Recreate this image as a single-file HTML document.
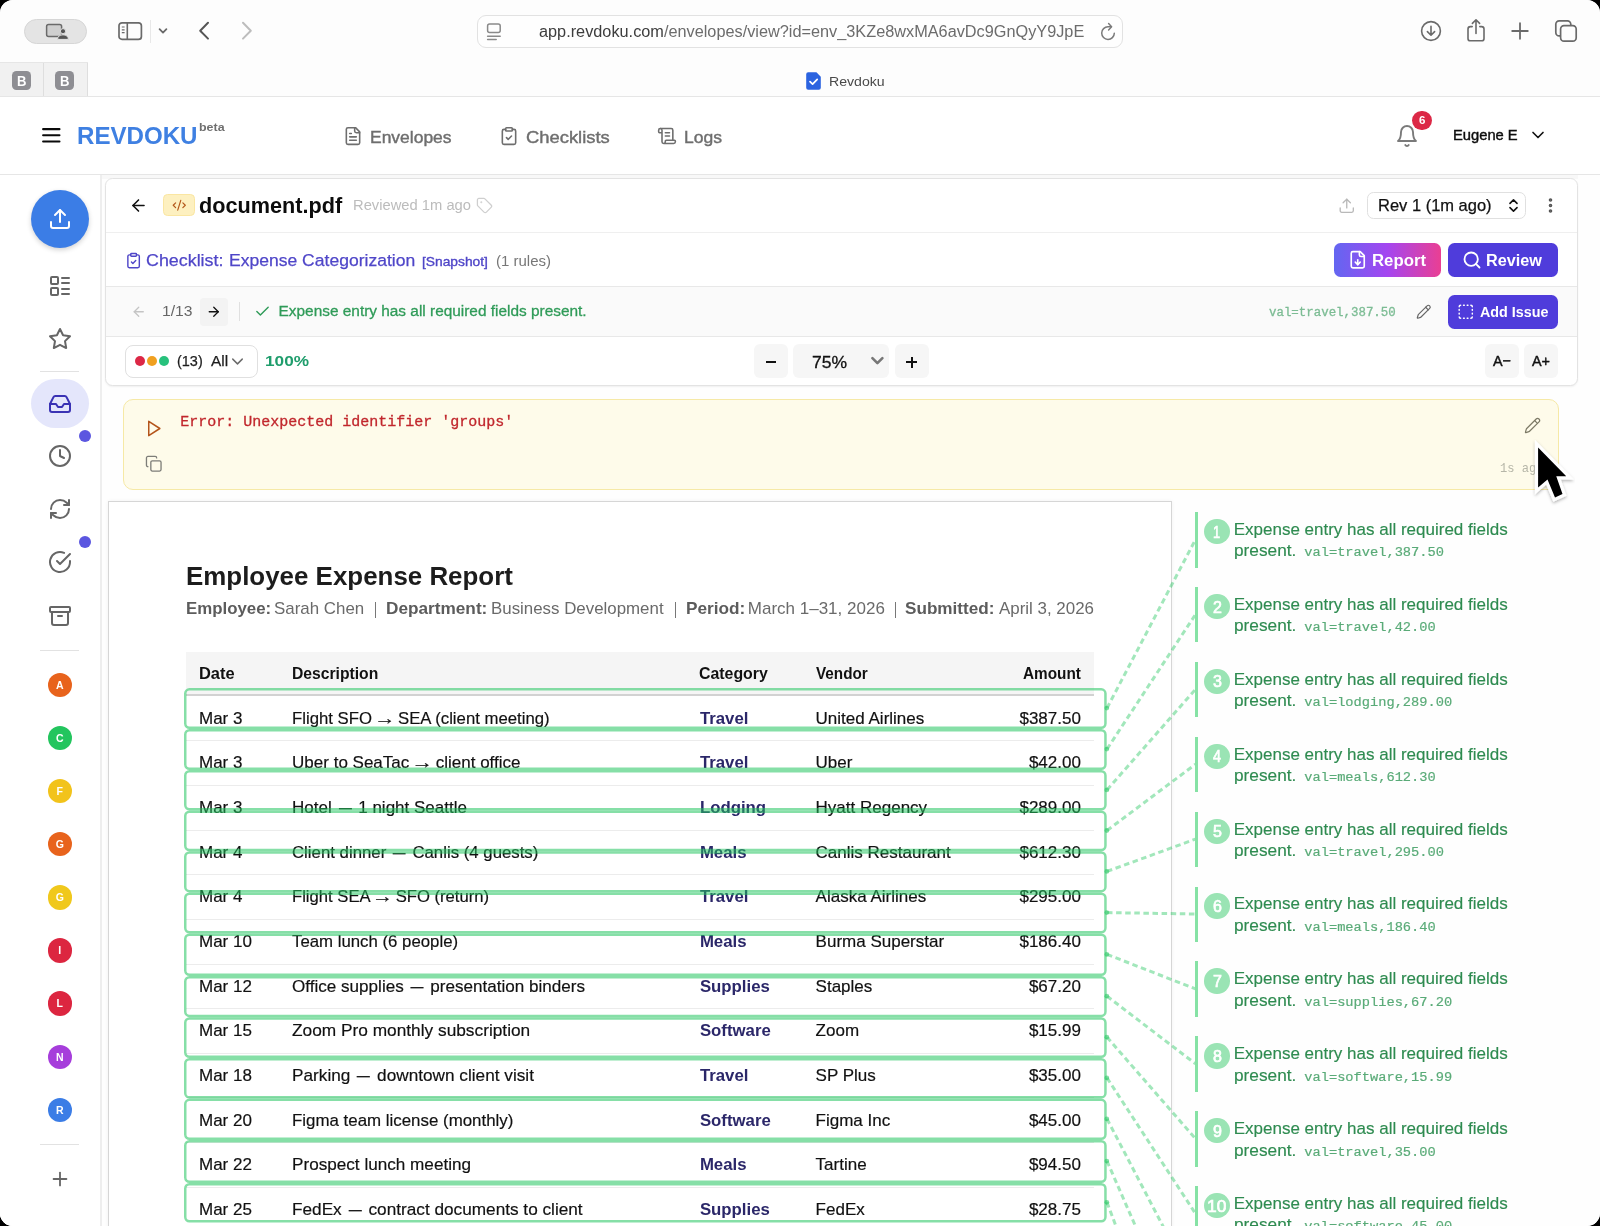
<!DOCTYPE html>
<html lang="en"><head><meta charset="utf-8"><title>Revdoku</title><style>
html,body{margin:0;padding:0}
body{width:1600px;height:1226px;overflow:hidden;background:#000;position:relative;font-family:"Liberation Sans",sans-serif}
#w{position:absolute;left:0;top:0;width:1600px;height:1226px;border-radius:13px;overflow:hidden;background:#fff;will-change:transform}
.a{position:absolute;box-sizing:border-box}
.t{white-space:pre;transform-origin:0 0}
.ar{display:inline-block;width:1em;text-align:center;transform:scaleX(1.28)}
.em{display:inline-block;transform:scaleX(.76)}
.i{fill:none;stroke:currentColor;stroke-linecap:round;stroke-linejoin:round}
</style></head>
<body><div id="w">
<div class="a" style="left:0px;top:0px;width:1600px;height:97px;background:#fdfdfd;"></div>
<div class="a" style="left:0px;top:63px;width:87px;height:33px;background:#f1f1f1;"></div>
<div class="a" style="left:43px;top:63px;width:1px;height:33px;background:#dedede;"></div>
<div class="a" style="left:86.5px;top:63px;width:1px;height:33px;background:#dedede;"></div>
<div class="a" style="left:0px;top:62px;width:88px;height:1px;background:#e6e6e6;"></div>
<div class="a" style="left:0px;top:96px;width:1600px;height:2px;background:#e6e6e6;"></div>
<div class="a" style="left:12px;top:71px;width:19px;height:19px;background:#8e8e93;border-radius:4.5px;"></div>
<div class="a t" style="left:16.67px;top:74px;color:#fff;font:700 14px/14px 'Liberation Sans',sans-serif;transform:scaleX(0.9333);">B</div>
<div class="a" style="left:55px;top:71px;width:19px;height:19px;background:#8e8e93;border-radius:4.5px;"></div>
<div class="a t" style="left:59.67px;top:74px;color:#fff;font:700 14px/14px 'Liberation Sans',sans-serif;transform:scaleX(0.9333);">B</div>
<div class="a" style="left:24px;top:19px;width:63px;height:24.5px;background:#e4e4e4;border-radius:12.5px;border:1px solid #d6d6d6;"></div>
<svg class="a" style="left:45px;top:23px;" width="24" height="17" viewBox="0 0 24 17"><rect x="1.6" y="1.6" width="15" height="12" rx="2" fill="#cfcfcf" stroke="#6a6a6a" stroke-width="1.5"/><circle cx="18" cy="8.2" r="2.6" fill="#555" stroke="#e4e4e4" stroke-width="1"/><path d="M12.6 16.4c0-3.2 2.4-4.6 5.4-4.6s5.4 1.4 5.4 4.6z" fill="#555" stroke="#e4e4e4" stroke-width="1"/></svg>
<svg class="a" style="left:117px;top:21px;" width="26" height="20" viewBox="0 0 26 20"><rect x="2" y="1.8" width="22.4" height="16.6" rx="3" fill="none" stroke="#6a6a6a" stroke-width="1.7"/><path d="M10.3 2v16.4" stroke="#6a6a6a" stroke-width="1.6"/><path d="M4.8 6h2.8M4.8 8.8h2.8M4.8 11.6h2.8" stroke="#6a6a6a" stroke-width="1.2"/></svg>
<div class="a" style="left:150px;top:20px;width:1px;height:23px;background:#e8e8e8;"></div>
<svg class="a" style="left:157px;top:26px;" width="12" height="10" viewBox="0 0 12 10"><path d="M2.6 3.2 6 6.6l3.4-3.4" fill="none" stroke="#6a6a6a" stroke-width="1.8" stroke-linecap="round" stroke-linejoin="round"/></svg>
<svg class="a" style="left:196px;top:20px;" width="16" height="22" viewBox="0 0 16 22"><path d="M12 2.8 4.2 10.7 12 18.6" fill="none" stroke="#565656" stroke-width="2" stroke-linecap="round" stroke-linejoin="round"/></svg>
<svg class="a" style="left:239px;top:20px;" width="16" height="22" viewBox="0 0 16 22"><path d="M4 2.8l7.8 7.9L4 18.6" fill="none" stroke="#bdbdbd" stroke-width="2" stroke-linecap="round" stroke-linejoin="round"/></svg>
<div class="a" style="left:477px;top:15px;width:646px;height:32.5px;background:#fefefe;border-radius:9px;border:1px solid #e2e2e2;"></div>
<svg class="a" style="left:485px;top:21px;" width="18" height="21" viewBox="0 0 18 21"><rect x="2.6" y="3" width="12.6" height="8.6" rx="2" fill="none" stroke="#8a8a8a" stroke-width="1.5"/><path d="M2.6 15.2h12.6M2.6 18.6h8.6" stroke="#8a8a8a" stroke-width="1.5" stroke-linecap="round"/></svg>
<div class="a t" style="left:538.96px;top:24px;color:#6c6c6c;font:400 15.6px/15.6px 'Liberation Sans',sans-serif;transform:scaleX(1.0441);"><span style="color:#3d3d3d">app.revdoku.com</span>/envelopes/view?id=env_3KZe8wxMA6avDc9GnQyY9JpE</div>
<svg class="a" style="left:1099px;top:21px;" width="18" height="21" viewBox="0 0 18 21"><path d="M15.3 12.2a6.3 6.3 0 1 1-6.3-6.4h3" fill="none" stroke="#7a7a7a" stroke-width="1.5" stroke-linecap="round"/><path d="M9.6 2.6l3 3.2-3 3.1" fill="none" stroke="#7a7a7a" stroke-width="1.5" stroke-linecap="round" stroke-linejoin="round"/></svg>
<svg class="a" style="left:805px;top:71px;" width="17" height="20" viewBox="0 0 17 20"><path d="M1.2 3.2a2 2 0 0 1 2-2h8.2l4.4 4.6v11a2 2 0 0 1-2 2H3.2a2 2 0 0 1-2-2z" fill="#2b63e0"/><path d="M5 10.6l2.6 2.6 4.6-4.8" fill="none" stroke="#fff" stroke-width="1.7" stroke-linecap="round" stroke-linejoin="round"/></svg>
<div class="a t" style="left:828.96px;top:75px;color:#4a4a4a;font:400 13.6px/13.6px 'Liberation Sans',sans-serif;transform:scaleX(1.0385);">Revdoku</div>
<svg class="a" style="left:1419px;top:19px;" width="24" height="24" viewBox="0 0 24 24"><circle cx="12" cy="12" r="9.4" fill="none" stroke="#6a6a6a" stroke-width="1.6"/><path d="M12 7.4v8.6M8.4 12.6l3.6 3.6 3.6-3.6" fill="none" stroke="#6a6a6a" stroke-width="1.6" stroke-linecap="round" stroke-linejoin="round"/></svg>
<svg class="a" style="left:1464px;top:17px;" width="24" height="27" viewBox="0 0 24 27"><path d="M8.2 9.6H6.4a2.4 2.4 0 0 0-2.4 2.4v9.4a2.4 2.4 0 0 0 2.4 2.4h11.2a2.4 2.4 0 0 0 2.4-2.4V12a2.4 2.4 0 0 0-2.4-2.4h-1.8" fill="none" stroke="#6a6a6a" stroke-width="1.6" stroke-linecap="round"/><path d="M12 16.4V3.2M8.4 6.4 12 2.8l3.6 3.6" fill="none" stroke="#6a6a6a" stroke-width="1.6" stroke-linecap="round" stroke-linejoin="round"/></svg>
<svg class="a" style="left:1510px;top:21px;" width="20" height="20" viewBox="0 0 20 20"><path d="M10 2.2v15.6M2.2 10h15.6" fill="none" stroke="#6a6a6a" stroke-width="1.8" stroke-linecap="round"/></svg>
<svg class="a" style="left:1553px;top:18px;" width="26" height="26" viewBox="0 0 26 26"><rect x="2.8" y="2.8" width="15" height="15" rx="3.4" fill="none" stroke="#6a6a6a" stroke-width="1.7"/><rect x="7.6" y="7.6" width="15.6" height="15.6" rx="3.4" fill="#fdfdfd" stroke="#6a6a6a" stroke-width="1.7"/></svg>
<div class="a" style="left:0px;top:97px;width:1600px;height:77.5px;background:#fff;"></div>
<div class="a" style="left:0px;top:174px;width:1600px;height:1px;background:#e6e6e6;"></div>
<svg class="a i" style="left:38.70px;top:123.00px;color:#0a0a0a;" width="24.6" height="24.6" viewBox="0 0 24 24" stroke-width="2"><path d="M4 12h16M4 6h16M4 18h16"/></svg>
<div class="a t" style="left:76.84px;top:124px;color:#3f80e2;font:700 24.6px/24.6px 'Liberation Sans',sans-serif;transform:scaleX(0.9800);">REVDOKU</div>
<div class="a t" style="left:199.27px;top:122px;color:#6f6f6f;font:700 11px/11px 'Liberation Sans',sans-serif;transform:scaleX(1.1318);">beta</div>
<svg class="a i" style="left:342.60px;top:126.20px;color:#6e6e6e;" width="20" height="20" viewBox="0 0 24 24" stroke-width="1.9"><path d="M15 2H6a2 2 0 0 0-2 2v16a2 2 0 0 0 2 2h12a2 2 0 0 0 2-2V7Z"/><path d="M14 2v4a2 2 0 0 0 2 2h4"/><path d="M10 9H8"/><path d="M16 13H8"/><path d="M16 17H8"/></svg>
<div class="a t" style="left:369.75px;top:130px;color:#6e6e6e;font:400 16.6px/16.6px 'Liberation Sans',sans-serif;transform:scaleX(1.0526);-webkit-text-stroke:0.4px #6e6e6e;">Envelopes</div>
<svg class="a i" style="left:498.70px;top:126.20px;color:#6e6e6e;" width="20" height="20" viewBox="0 0 24 24" stroke-width="1.9"><rect width="8" height="4" x="8" y="2" rx="1" ry="1"/><path d="M16 4h2a2 2 0 0 1 2 2v14a2 2 0 0 1-2 2H6a2 2 0 0 1-2-2V6a2 2 0 0 1 2-2h2"/><path d="m9 14 2 2 4-4"/></svg>
<div class="a t" style="left:525.69px;top:130px;color:#6e6e6e;font:400 16.6px/16.6px 'Liberation Sans',sans-serif;transform:scaleX(1.1081);-webkit-text-stroke:0.4px #6e6e6e;">Checklists</div>
<svg class="a i" style="left:657.00px;top:126.20px;color:#6e6e6e;" width="20" height="20" viewBox="0 0 24 24" stroke-width="1.9"><path d="M15 12h-5"/><path d="M15 8h-5"/><path d="M19 17V5a2 2 0 0 0-2-2H4"/><path d="M8 21h12a2 2 0 0 0 2-2v-1a1 1 0 0 0-1-1H11a1 1 0 0 0-1 1v1a2 2 0 1 1-4 0V5a2 2 0 1 0-4 0v2a1 1 0 0 0 1 1h3"/></svg>
<div class="a t" style="left:683.94px;top:130px;color:#6e6e6e;font:400 16.6px/16.6px 'Liberation Sans',sans-serif;transform:scaleX(1.0571);-webkit-text-stroke:0.4px #6e6e6e;">Logs</div>
<svg class="a i" style="left:1394.60px;top:123.60px;color:#7a7a7a;" width="24" height="24" viewBox="0 0 24 24" stroke-width="1.9"><path d="M6 8a6 6 0 0 1 12 0c0 7 3 9 3 9H3s3-2 3-9"/><path d="M10.3 21a1.94 1.94 0 0 0 3.4 0"/></svg>
<div class="a" style="left:1412px;top:110.8px;width:19.6px;height:19.6px;background:#dc2846;border-radius:10px;"></div>
<div class="a t" style="left:1418.70px;top:115px;color:#fff;font:700 11.2px/11.2px 'Liberation Sans',sans-serif;transform:scaleX(1.0333);">6</div>
<div class="a t" style="left:1452.66px;top:128px;color:#0d0d0d;font:400 14.2px/14.2px 'Liberation Sans',sans-serif;transform:scaleX(1.0377);-webkit-text-stroke:0.4px #0d0d0d;">Eugene E</div>
<svg class="a i" style="left:1527.50px;top:125.40px;color:#111;" width="20" height="20" viewBox="0 0 24 24" stroke-width="2"><path d="m6 9 6 6 6-6"/></svg>
<div class="a" style="left:0px;top:175px;width:1600px;height:1051px;background:#fefefe;"></div>
<div class="a" style="left:102px;top:175px;width:1476px;height:4px;background:#f8f8f8;"></div>
<div class="a" style="left:0px;top:175px;width:101px;height:1051px;background:#fff;"></div>
<div class="a" style="left:100px;top:175px;width:2px;height:1051px;background:#eeeeee;"></div>
<div class="a" style="left:31px;top:189.5px;width:58px;height:58px;background:#3b7de6;border-radius:29px;box-shadow:0 2px 5px rgba(0,0,0,.18);"></div>
<svg class="a i" style="left:48.30px;top:206.80px;color:#fff;" width="24" height="24" viewBox="0 0 24 24" stroke-width="2"><path d="M21 15v4a2 2 0 0 1-2 2H5a2 2 0 0 1-2-2v-4"/><path d="m17 8-5-5-5 5"/><path d="M12 3v12"/></svg>
<svg class="a i" style="left:48.30px;top:274.00px;color:#666;" width="24" height="24" viewBox="0 0 24 24" stroke-width="2"><rect width="7" height="7" x="3" y="3" rx="1"/><rect width="7" height="7" x="3" y="14" rx="1"/><path d="M14 4h7"/><path d="M14 9h7"/><path d="M14 15h7"/><path d="M14 20h7"/></svg>
<svg class="a i" style="left:48.30px;top:327.00px;color:#666;" width="24" height="24" viewBox="0 0 24 24" stroke-width="2"><path d="M12 2l3.09 6.26L22 9.27l-5 4.87 1.18 6.88L12 17.77l-6.18 3.25L7 14.14 2 9.27l6.91-1.01z"/></svg>
<div class="a" style="left:40px;top:371px;width:39px;height:1px;background:#e2e2e2;"></div>
<div class="a" style="left:31px;top:379px;width:58px;height:49px;background:#e4e6fb;border-radius:24.5px;"></div>
<svg class="a i" style="left:48.00px;top:391.50px;color:#3a32b4;" width="24" height="24" viewBox="0 0 24 24" stroke-width="2"><path d="M22 12h-6l-2 3h-4l-2-3H2"/><path d="M5.45 5.11 2 12v6a2 2 0 0 0 2 2h16a2 2 0 0 0 2-2v-6l-3.45-6.89A2 2 0 0 0 16.76 4H7.24a2 2 0 0 0-1.79 1.11z"/></svg>
<div class="a" style="left:79px;top:430px;width:12px;height:12px;background:#5b56e0;border-radius:6px;"></div>
<svg class="a i" style="left:48.30px;top:444.30px;color:#666;" width="24" height="24" viewBox="0 0 24 24" stroke-width="2"><circle cx="12" cy="12" r="10"/><path d="M12 6v6l4 2"/></svg>
<svg class="a i" style="left:48.30px;top:497.30px;color:#666;" width="24" height="24" viewBox="0 0 24 24" stroke-width="2"><path d="M3 12a9 9 0 0 1 9-9 9.75 9.75 0 0 1 6.74 2.74L21 8"/><path d="M21 3v5h-5"/><path d="M21 12a9 9 0 0 1-9 9 9.75 9.75 0 0 1-6.74-2.74L3 16"/><path d="M8 16H3v5"/></svg>
<div class="a" style="left:79px;top:536px;width:12px;height:12px;background:#5b56e0;border-radius:6px;"></div>
<svg class="a i" style="left:48.30px;top:550.30px;color:#666;" width="24" height="24" viewBox="0 0 24 24" stroke-width="2"><path d="M22 11.08V12a10 10 0 1 1-5.93-9.14"/><path d="m9 11 3 3L22 4"/></svg>
<svg class="a i" style="left:48.30px;top:603.70px;color:#666;" width="24" height="24" viewBox="0 0 24 24" stroke-width="2"><rect width="20" height="5" x="2" y="3" rx="1"/><path d="M4 8v11a2 2 0 0 0 2 2h12a2 2 0 0 0 2-2V8"/><path d="M10 12h4"/></svg>
<div class="a" style="left:40px;top:650px;width:39px;height:1px;background:#e2e2e2;"></div>
<div class="a" style="left:47.6px;top:672.6999999999999px;width:24.4px;height:24.4px;background:#e8631c;border-radius:12.2px;"></div>
<div class="a t" style="left:47.6px;top:672.7px;width:24.4px;height:24.4px;line-height:24.6px;text-align:center;color:#fff;font-weight:700;font-size:10.5px">A</div>
<div class="a" style="left:47.6px;top:725.8px;width:24.4px;height:24.4px;background:#23c55e;border-radius:12.2px;"></div>
<div class="a t" style="left:47.6px;top:725.8px;width:24.4px;height:24.4px;line-height:24.6px;text-align:center;color:#fff;font-weight:700;font-size:10.5px">C</div>
<div class="a" style="left:47.6px;top:779.0px;width:24.4px;height:24.4px;background:#f2c31b;border-radius:12.2px;"></div>
<div class="a t" style="left:47.6px;top:779.0px;width:24.4px;height:24.4px;line-height:24.6px;text-align:center;color:#fff;font-weight:700;font-size:10.5px">F</div>
<div class="a" style="left:47.6px;top:832.0999999999999px;width:24.4px;height:24.4px;background:#e8631c;border-radius:12.2px;"></div>
<div class="a t" style="left:47.6px;top:832.1px;width:24.4px;height:24.4px;line-height:24.6px;text-align:center;color:#fff;font-weight:700;font-size:10.5px">G</div>
<div class="a" style="left:47.6px;top:885.1999999999999px;width:24.4px;height:24.4px;background:#f0c81c;border-radius:12.2px;"></div>
<div class="a t" style="left:47.6px;top:885.2px;width:24.4px;height:24.4px;line-height:24.6px;text-align:center;color:#fff;font-weight:700;font-size:10.5px">G</div>
<div class="a" style="left:47.6px;top:938.3px;width:24.4px;height:24.4px;background:#dc2640;border-radius:12.2px;"></div>
<div class="a t" style="left:47.6px;top:938.3px;width:24.4px;height:24.4px;line-height:24.6px;text-align:center;color:#fff;font-weight:700;font-size:10.5px">I</div>
<div class="a" style="left:47.6px;top:991.4px;width:24.4px;height:24.4px;background:#dc2640;border-radius:12.2px;"></div>
<div class="a t" style="left:47.6px;top:991.4px;width:24.4px;height:24.4px;line-height:24.6px;text-align:center;color:#fff;font-weight:700;font-size:10.5px">L</div>
<div class="a" style="left:47.6px;top:1044.8px;width:24.4px;height:24.4px;background:#a63ddb;border-radius:12.2px;"></div>
<div class="a t" style="left:47.6px;top:1044.8px;width:24.4px;height:24.4px;line-height:24.6px;text-align:center;color:#fff;font-weight:700;font-size:10.5px">N</div>
<div class="a" style="left:47.6px;top:1098.0px;width:24.4px;height:24.4px;background:#3b7de6;border-radius:12.2px;"></div>
<div class="a t" style="left:47.6px;top:1098.0px;width:24.4px;height:24.4px;line-height:24.6px;text-align:center;color:#fff;font-weight:700;font-size:10.5px">R</div>
<div class="a" style="left:40px;top:1144px;width:39px;height:1px;background:#e2e2e2;"></div>
<svg class="a i" style="left:49.00px;top:1168.00px;color:#666;" width="22" height="22" viewBox="0 0 24 24" stroke-width="2"><path d="M5 12h14"/><path d="M12 5v14"/></svg>
<div class="a" style="left:104.5px;top:178px;width:1473px;height:207.5px;background:#fff;border-radius:7.5px;border:1px solid #e3e3e3;box-shadow:0 1px 2px rgba(0,0,0,.06);"></div>
<div class="a" style="left:105.5px;top:232px;width:1471px;height:1px;background:#efefef;"></div>
<div class="a" style="left:105.5px;top:286.5px;width:1471px;height:50px;background:#fafafa;"></div>
<div class="a" style="left:105.5px;top:286px;width:1471px;height:1px;background:#e8e8e8;"></div>
<div class="a" style="left:105.5px;top:336px;width:1471px;height:1px;background:#e8e8e8;"></div>
<svg class="a i" style="left:129.10px;top:195.50px;color:#111;" width="19" height="19" viewBox="0 0 24 24" stroke-width="2"><path d="m12 19-7-7 7-7"/><path d="M19 12H5"/></svg>
<div class="a" style="left:163px;top:194px;width:31.5px;height:22px;background:#fdf0c0;border-radius:4.5px;border:1px solid #fae6a2;"></div>
<svg class="a i" style="left:171.65px;top:198.05px;color:#b4591c;" width="14.5" height="14.5" viewBox="0 0 24 24" stroke-width="2"><path d="m18 16 4-4-4-4"/><path d="m6 8-4 4 4 4"/><path d="m14.5 4-5 16"/></svg>
<div class="a t" style="left:199.22px;top:195px;color:#0c0c0c;font:700 22px/22px 'Liberation Sans',sans-serif;transform:scaleX(0.9848);">document.pdf</div>
<div class="a t" style="left:352.53px;top:197px;color:#bcbcbc;font:400 15.2px/15.2px 'Liberation Sans',sans-serif;transform:scaleX(0.9708);">Reviewed 1m ago</div>
<svg class="a i" style="left:476.00px;top:197.00px;color:#cfcfcf;" width="17" height="17" viewBox="0 0 24 24" stroke-width="1.8"><path d="M12.586 2.586A2 2 0 0 0 11.172 2H4a2 2 0 0 0-2 2v7.172a2 2 0 0 0 .586 1.414l8.704 8.704a2.426 2.426 0 0 0 3.42 0l6.58-6.58a2.426 2.426 0 0 0 0-3.42z"/><circle cx="7.5" cy="7.5" r=".5" fill="currentColor"/></svg>
<svg class="a i" style="left:1337.75px;top:196.75px;color:#b9b9b9;" width="17.5" height="17.5" viewBox="0 0 24 24" stroke-width="1.8"><path d="M21 15v4a2 2 0 0 1-2 2H5a2 2 0 0 1-2-2v-4"/><path d="m17 8-5-5-5 5"/><path d="M12 3v12"/></svg>
<div class="a" style="left:1367px;top:192px;width:158.5px;height:26.5px;background:#fff;border-radius:6.5px;border:1px solid #e0e0e0;"></div>
<div class="a t" style="left:1377.53px;top:197px;color:#111;font:400 17px/17px 'Liberation Sans',sans-serif;transform:scaleX(0.9696);-webkit-text-stroke:0.25px #111;">Rev 1 (1m ago)</div>
<svg class="a i" style="left:1504.50px;top:196.70px;color:#111;" width="17" height="17" viewBox="0 0 24 24" stroke-width="2.2"><path d="m7 15 5 5 5-5"/><path d="m7 9 5-5 5 5"/></svg>
<svg class="a i" style="left:1540.90px;top:196.10px;color:#555;" width="19" height="19" viewBox="0 0 24 24" stroke-width="2.6"><circle cx="12" cy="12" r="1"/><circle cx="12" cy="5" r="1"/><circle cx="12" cy="19" r="1"/></svg>
<svg class="a i" style="left:124.50px;top:251.60px;color:#4f46c8;" width="17.2" height="17.2" viewBox="0 0 24 24" stroke-width="2"><rect width="8" height="4" x="8" y="2" rx="1" ry="1"/><path d="M16 4h2a2 2 0 0 1 2 2v14a2 2 0 0 1-2 2H6a2 2 0 0 1-2-2V6a2 2 0 0 1 2-2h2"/><path d="m9 14 2 2 4-4"/></svg>
<div class="a t" style="left:145.97px;top:252px;color:#4f46c8;font:400 17.4px/17.4px 'Liberation Sans',sans-serif;transform:scaleX(1.0274);-webkit-text-stroke:0.25px #4f46c8;">Checklist:</div>
<div class="a t" style="left:229.49px;top:252px;color:#4f46c8;font:400 17.4px/17.4px 'Liberation Sans',sans-serif;transform:scaleX(1.0082);-webkit-text-stroke:0.25px #4f46c8;">Expense Categorization</div>
<div class="a t" style="left:422.39px;top:256px;color:#4f46c8;font:400 12.4px/12.4px 'Liberation Sans',sans-serif;transform:scaleX(1.1121);-webkit-text-stroke:0.35px #4f46c8;">[Snapshot]</div>
<div class="a t" style="left:496.00px;top:253px;color:#777;font:400 15px/15px 'Liberation Sans',sans-serif;">(1 rules)</div>
<div class="a" style="left:1334px;top:243px;width:106.5px;height:33.5px;border-radius:6.5px;background:linear-gradient(90deg,#6366f1 0%,#a446f0 50%,#ea3f93 100%)"></div>
<svg class="a i" style="left:1348.25px;top:250.05px;color:#fff;" width="19.5" height="19.5" viewBox="0 0 24 24" stroke-width="2"><path d="M15 2H6a2 2 0 0 0-2 2v16a2 2 0 0 0 2 2h12a2 2 0 0 0 2-2V7Z"/><path d="M14 2v4a2 2 0 0 0 2 2h4"/><path d="M12 18v-6"/><path d="m9 15 3 3 3-3"/></svg>
<div class="a t" style="left:1372.04px;top:252px;color:#fff;font:700 17.4px/17.4px 'Liberation Sans',sans-serif;transform:scaleX(0.9636);">Report</div>
<div class="a" style="left:1448px;top:243px;width:109.5px;height:33.5px;background:#4f3cdb;border-radius:6.5px;"></div>
<svg class="a i" style="left:1462.00px;top:250.00px;color:#fff;" width="20" height="20" viewBox="0 0 24 24" stroke-width="2.2"><circle cx="11" cy="11" r="8"/><path d="m21 21-4.3-4.3"/></svg>
<div class="a t" style="left:1486.07px;top:252px;color:#fff;font:700 17.4px/17.4px 'Liberation Sans',sans-serif;transform:scaleX(0.9322);">Review</div>
<svg class="a i" style="left:131.25px;top:303.85px;color:#c4c4c4;" width="15.5" height="15.5" viewBox="0 0 24 24" stroke-width="2"><path d="m12 19-7-7 7-7"/><path d="M19 12H5"/></svg>
<div class="a t" style="left:161.78px;top:303px;color:#666;font:400 15.4px/15.4px 'Liberation Sans',sans-serif;transform:scaleX(1.0172);">1/13</div>
<div class="a" style="left:200px;top:298px;width:28px;height:27.5px;background:#f3f3f3;border-radius:4px;"></div>
<svg class="a i" style="left:206.45px;top:303.85px;color:#111;" width="15.5" height="15.5" viewBox="0 0 24 24" stroke-width="2"><path d="M5 12h14"/><path d="m12 5 7 7-7 7"/></svg>
<div class="a" style="left:239px;top:302px;width:1px;height:19px;background:#e0e0e0;"></div>
<svg class="a i" style="left:253.50px;top:303.00px;color:#2f9b58;" width="17" height="17" viewBox="0 0 24 24" stroke-width="2"><path d="M20 6 9 17l-5-5"/></svg>
<div class="a t" style="left:278.60px;top:303px;color:#2f9b58;font:400 15.4px/15.4px 'Liberation Sans',sans-serif;-webkit-text-stroke:0.3px #2f9b58;">Expense entry has all required fields present.</div>
<div class="a t" style="left:1268.60px;top:307px;color:#7cbc94;font:400 12.5px/12.5px 'Liberation Mono',monospace;transform:scaleX(0.9937);-webkit-text-stroke:0.3px #7cbc94;">val=travel,387.50</div>
<svg class="a i" style="left:1416.25px;top:303.85px;color:#666;" width="15.5" height="15.5" viewBox="0 0 24 24" stroke-width="1.8"><path d="M21.174 6.812a1 1 0 0 0-3.986-3.987L3.842 16.174a2 2 0 0 0-.5.83l-1.321 4.352a.5.5 0 0 0 .623.622l4.353-1.32a2 2 0 0 0 .83-.497z"/><path d="m15 5 4 4"/></svg>
<div class="a" style="left:1448px;top:295px;width:109.5px;height:33.5px;background:#4f3cdb;border-radius:6.5px;"></div>
<svg class="a i" style="left:1456.75px;top:302.85px;color:#fff;" width="17.5" height="17.5" viewBox="0 0 24 24" stroke-width="2"><path d="M5 3a2 2 0 0 0-2 2"/><path d="M19 3a2 2 0 0 1 2 2"/><path d="M21 19a2 2 0 0 1-2 2"/><path d="M5 21a2 2 0 0 1-2-2"/><path d="M9 3h1"/><path d="M9 21h1"/><path d="M14 3h1"/><path d="M14 21h1"/><path d="M3 9v1"/><path d="M21 9v1"/><path d="M3 14v1"/><path d="M21 14v1"/></svg>
<div class="a t" style="left:1480.00px;top:304px;color:#fff;font:700 15.4px/15.4px 'Liberation Sans',sans-serif;transform:scaleX(0.9315);">Add Issue</div>
<div class="a" style="left:125px;top:344.6px;width:132.5px;height:33px;background:#fff;border-radius:8px;border:1px solid #e0e0e0;"></div>
<div class="a" style="left:135.3px;top:356.2px;width:9.8px;height:9.8px;background:#dc2846;border-radius:5px;"></div>
<div class="a" style="left:147.3px;top:356.2px;width:9.8px;height:9.8px;background:#f0a020;border-radius:5px;"></div>
<div class="a" style="left:159.3px;top:356.2px;width:9.8px;height:9.8px;background:#27c17c;border-radius:5px;"></div>
<div class="a t" style="left:176.66px;top:353px;color:#1e1e1e;font:400 15.4px/15.4px 'Liberation Sans',sans-serif;transform:scaleX(0.9385);-webkit-text-stroke:0.25px #1e1e1e;">(13)</div>
<div class="a t" style="left:211.00px;top:353px;color:#1e1e1e;font:400 15.4px/15.4px 'Liberation Sans',sans-serif;-webkit-text-stroke:0.25px #1e1e1e;">All</div>
<svg class="a i" style="left:227.50px;top:351.80px;color:#6a6a6a;" width="19" height="19" viewBox="0 0 24 24" stroke-width="1.8"><path d="m6 9 6 6 6-6"/></svg>
<div class="a t" style="left:265.38px;top:353px;color:#1f9d6c;font:700 15.4px/15.4px 'Liberation Sans',sans-serif;transform:scaleX(1.1184);">100%</div>
<div class="a" style="left:754px;top:344px;width:34px;height:34px;background:#f6f6f6;border-radius:6px;"></div>
<div class="a" style="left:792.5px;top:344px;width:96.5px;height:34px;background:#f6f6f6;border-radius:6px;"></div>
<div class="a" style="left:894.5px;top:344px;width:34px;height:34px;background:#f6f6f6;border-radius:6px;"></div>
<div class="a" style="left:766px;top:361.4px;width:10.4px;height:2px;background:#111;"></div>
<div class="a t" style="left:811.57px;top:354px;color:#111;font:400 17px/17px 'Liberation Sans',sans-serif;transform:scaleX(1.0303);-webkit-text-stroke:0.3px #111;">75%</div>
<svg class="a" style="left:869px;top:354px;" width="17" height="14" viewBox="0 0 17 14"><path d="M3.4 4.2 8.4 9.2l5-5" fill="none" stroke="#777" stroke-width="2.6" stroke-linecap="round" stroke-linejoin="round"/></svg>
<div class="a" style="left:906.2px;top:361.4px;width:10.6px;height:2px;background:#111;"></div>
<div class="a" style="left:910.5px;top:357.1px;width:2px;height:10.6px;background:#111;"></div>
<div class="a" style="left:1485px;top:344px;width:33.5px;height:34px;background:#f6f6f6;border-radius:6px;"></div>
<div class="a" style="left:1524px;top:344px;width:33.5px;height:34px;background:#f6f6f6;border-radius:6px;"></div>
<div class="a t" style="left:1493.00px;top:353px;color:#111;font:400 15.2px/15.2px 'Liberation Sans',sans-serif;transform:scaleX(0.9474);-webkit-text-stroke:0.45px #111;">A−</div>
<div class="a t" style="left:1532.00px;top:353px;color:#111;font:400 15.2px/15.2px 'Liberation Sans',sans-serif;transform:scaleX(0.9474);-webkit-text-stroke:0.45px #111;">A+</div>
<div class="a" style="left:123px;top:398.8px;width:1436px;height:91.2px;background:#fefbea;border-radius:10px;border:1px solid #f6e9a6;"></div>
<svg class="a i" style="left:143.90px;top:419.40px;color:#b4541a;" width="19" height="19" viewBox="0 0 24 24" stroke-width="1.9"><path d="M6 3l14 9-14 9z"/></svg>
<div class="a t" style="left:180.20px;top:415px;color:#c1272d;font:400 15px/15px 'Liberation Mono',monospace;-webkit-text-stroke:0.3px #c1272d;">Error: Unexpected identifier &#x27;groups&#x27;</div>
<svg class="a i" style="left:144.75px;top:455.25px;color:#7d7d78;" width="17.5" height="17.5" viewBox="0 0 24 24" stroke-width="1.8"><rect width="14" height="14" x="8" y="8" rx="2" ry="2"/><path d="M4 16c-1.1 0-2-.9-2-2V4c0-1.1.9-2 2-2h10c1.1 0 2 .9 2 2"/></svg>
<svg class="a i" style="left:1523.50px;top:416.50px;color:#7d7a66;" width="17" height="17" viewBox="0 0 24 24" stroke-width="1.7"><path d="M21.174 6.812a1 1 0 0 0-3.986-3.987L3.842 16.174a2 2 0 0 0-.5.83l-1.321 4.352a.5.5 0 0 0 .623.622l4.353-1.32a2 2 0 0 0 .83-.497z"/><path d="m15 5 4 4"/></svg>
<div class="a t" style="left:1499.81px;top:463px;color:#b6b6a8;font:400 12.2px/12.2px 'Liberation Mono',monospace;transform:scaleX(0.9929);">1s ago</div>
<div class="a" style="left:108px;top:501px;width:1064px;height:730px;background:#fff;border:1px solid #d6d6d6;box-shadow:0 0 4px rgba(0,0,0,.05);"></div>
<div class="a t" style="left:185.84px;top:563px;color:#1c1c1c;font:700 26.4px/26.4px 'Liberation Sans',sans-serif;transform:scaleX(0.9819);">Employee Expense Report</div>
<div class="a t" style="left:185.81px;top:600px;color:#5c5c5c;font:700 17px/17px 'Liberation Sans',sans-serif;transform:scaleX(0.9905);">Employee:</div>
<div class="a t" style="left:274.01px;top:600px;color:#6a6a6a;font:400 17px/17px 'Liberation Sans',sans-serif;transform:scaleX(0.9944);">Sarah Chen</div>
<div class="a" style="left:374.8px;top:601.5px;width:1.3px;height:16.5px;background:#777;"></div>
<div class="a t" style="left:385.79px;top:600px;color:#5c5c5c;font:700 17px/17px 'Liberation Sans',sans-serif;transform:scaleX(1.0122);">Department:</div>
<div class="a t" style="left:490.81px;top:600px;color:#6a6a6a;font:400 17px/17px 'Liberation Sans',sans-serif;transform:scaleX(0.9925);">Business Development</div>
<div class="a" style="left:674.8px;top:601.5px;width:1.3px;height:16.5px;background:#777;"></div>
<div class="a t" style="left:685.79px;top:600px;color:#5c5c5c;font:700 17px/17px 'Liberation Sans',sans-serif;transform:scaleX(1.0125);">Period:</div>
<div class="a t" style="left:747.80px;top:600px;color:#6a6a6a;font:400 17px/17px 'Liberation Sans',sans-serif;">March 1–31, 2026</div>
<div class="a" style="left:894.8px;top:601.5px;width:1.3px;height:16.5px;background:#777;"></div>
<div class="a t" style="left:905.29px;top:600px;color:#5c5c5c;font:700 17px/17px 'Liberation Sans',sans-serif;transform:scaleX(1.0081);">Submitted:</div>
<div class="a t" style="left:998.50px;top:600px;color:#6a6a6a;font:400 17px/17px 'Liberation Sans',sans-serif;transform:scaleX(0.9947);">April 3, 2026</div>
<div class="a" style="left:186px;top:652px;width:908px;height:43px;background:#f5f5f5;"></div>
<div class="a" style="left:186px;top:694px;width:908px;height:2px;background:#d2d2d2;"></div>
<div class="a t" style="left:199.27px;top:666px;color:#111;font:700 16px/16px 'Liberation Sans',sans-serif;transform:scaleX(1.0273);">Date</div>
<div class="a t" style="left:292.32px;top:666px;color:#111;font:700 16px/16px 'Liberation Sans',sans-serif;transform:scaleX(0.9802);">Description</div>
<div class="a t" style="left:699.01px;top:666px;color:#111;font:700 16px/16px 'Liberation Sans',sans-serif;transform:scaleX(0.9926);">Category</div>
<div class="a t" style="left:816.00px;top:666px;color:#111;font:700 16px/16px 'Liberation Sans',sans-serif;transform:scaleX(0.9537);">Vendor</div>
<div class="a t" style="left:1023.00px;top:666px;color:#111;font:700 16px/16px 'Liberation Sans',sans-serif;transform:scaleX(0.9583);">Amount</div>
<div class="a" style="left:186px;top:740px;width:908px;height:1px;background:#ececec;"></div>
<div class="a t" style="left:199.00px;top:710px;color:#111;font:400 17px/17px 'Liberation Sans',sans-serif;-webkit-text-stroke:0.18px #111;">Mar 3</div>
<div class="a t" style="left:292.10px;top:710px;color:#111;font:400 17px/17px 'Liberation Sans',sans-serif;transform:scaleX(0.9843);-webkit-text-stroke:0.18px #111;">Flight SFO <span class="ar">→</span> SEA (client meeting)</div>
<div class="a t" style="left:699.90px;top:711px;color:#2b2769;font:700 16.8px/16.8px 'Liberation Sans',sans-serif;">Travel</div>
<div class="a t" style="left:815.60px;top:710px;color:#111;font:400 17px/17px 'Liberation Sans',sans-serif;-webkit-text-stroke:0.18px #111;">United Airlines</div>
<div class="a t" style="left:1019.45px;top:710px;color:#111;font:400 17px/17px 'Liberation Sans',sans-serif;-webkit-text-stroke:0.18px #111;">$387.50</div>
<div class="a" style="left:186px;top:785px;width:908px;height:1px;background:#ececec;"></div>
<div class="a t" style="left:199.00px;top:754px;color:#111;font:400 17px/17px 'Liberation Sans',sans-serif;-webkit-text-stroke:0.18px #111;">Mar 3</div>
<div class="a t" style="left:292.10px;top:754px;color:#111;font:400 17px/17px 'Liberation Sans',sans-serif;-webkit-text-stroke:0.18px #111;">Uber to SeaTac <span class="ar">→</span> client office</div>
<div class="a t" style="left:699.90px;top:755px;color:#2b2769;font:700 16.8px/16.8px 'Liberation Sans',sans-serif;">Travel</div>
<div class="a t" style="left:815.60px;top:754px;color:#111;font:400 17px/17px 'Liberation Sans',sans-serif;-webkit-text-stroke:0.18px #111;">Uber</div>
<div class="a t" style="left:1028.90px;top:754px;color:#111;font:400 17px/17px 'Liberation Sans',sans-serif;-webkit-text-stroke:0.18px #111;">$42.00</div>
<div class="a" style="left:186px;top:830px;width:908px;height:1px;background:#ececec;"></div>
<div class="a t" style="left:199.00px;top:799px;color:#111;font:400 17px/17px 'Liberation Sans',sans-serif;-webkit-text-stroke:0.18px #111;">Mar 3</div>
<div class="a t" style="left:292.10px;top:799px;color:#111;font:400 17px/17px 'Liberation Sans',sans-serif;-webkit-text-stroke:0.18px #111;">Hotel <span class="em">—</span> 1 night Seattle</div>
<div class="a t" style="left:699.90px;top:800px;color:#2b2769;font:700 16.8px/16.8px 'Liberation Sans',sans-serif;">Lodging</div>
<div class="a t" style="left:815.60px;top:799px;color:#111;font:400 17px/17px 'Liberation Sans',sans-serif;-webkit-text-stroke:0.18px #111;">Hyatt Regency</div>
<div class="a t" style="left:1019.45px;top:799px;color:#111;font:400 17px/17px 'Liberation Sans',sans-serif;-webkit-text-stroke:0.18px #111;">$289.00</div>
<div class="a" style="left:186px;top:874px;width:908px;height:1px;background:#ececec;"></div>
<div class="a t" style="left:199.00px;top:844px;color:#111;font:400 17px/17px 'Liberation Sans',sans-serif;-webkit-text-stroke:0.18px #111;">Mar 4</div>
<div class="a t" style="left:292.10px;top:844px;color:#111;font:400 17px/17px 'Liberation Sans',sans-serif;transform:scaleX(0.9876);-webkit-text-stroke:0.18px #111;">Client dinner <span class="em">—</span> Canlis (4 guests)</div>
<div class="a t" style="left:699.90px;top:845px;color:#2b2769;font:700 16.8px/16.8px 'Liberation Sans',sans-serif;">Meals</div>
<div class="a t" style="left:815.60px;top:844px;color:#111;font:400 17px/17px 'Liberation Sans',sans-serif;-webkit-text-stroke:0.18px #111;">Canlis Restaurant</div>
<div class="a t" style="left:1019.45px;top:844px;color:#111;font:400 17px/17px 'Liberation Sans',sans-serif;-webkit-text-stroke:0.18px #111;">$612.30</div>
<div class="a" style="left:186px;top:919px;width:908px;height:1px;background:#ececec;"></div>
<div class="a t" style="left:199.00px;top:888px;color:#111;font:400 17px/17px 'Liberation Sans',sans-serif;-webkit-text-stroke:0.18px #111;">Mar 4</div>
<div class="a t" style="left:292.10px;top:888px;color:#111;font:400 17px/17px 'Liberation Sans',sans-serif;transform:scaleX(0.9795);-webkit-text-stroke:0.18px #111;">Flight SEA <span class="ar">→</span> SFO (return)</div>
<div class="a t" style="left:699.90px;top:889px;color:#2b2769;font:700 16.8px/16.8px 'Liberation Sans',sans-serif;">Travel</div>
<div class="a t" style="left:815.60px;top:888px;color:#111;font:400 17px/17px 'Liberation Sans',sans-serif;-webkit-text-stroke:0.18px #111;">Alaska Airlines</div>
<div class="a t" style="left:1019.45px;top:888px;color:#111;font:400 17px/17px 'Liberation Sans',sans-serif;-webkit-text-stroke:0.18px #111;">$295.00</div>
<div class="a" style="left:186px;top:964px;width:908px;height:1px;background:#ececec;"></div>
<div class="a t" style="left:199.00px;top:933px;color:#111;font:400 17px/17px 'Liberation Sans',sans-serif;-webkit-text-stroke:0.18px #111;">Mar 10</div>
<div class="a t" style="left:292.10px;top:933px;color:#111;font:400 17px/17px 'Liberation Sans',sans-serif;transform:scaleX(0.9874);-webkit-text-stroke:0.18px #111;">Team lunch (6 people)</div>
<div class="a t" style="left:699.90px;top:934px;color:#2b2769;font:700 16.8px/16.8px 'Liberation Sans',sans-serif;">Meals</div>
<div class="a t" style="left:815.60px;top:933px;color:#111;font:400 17px/17px 'Liberation Sans',sans-serif;-webkit-text-stroke:0.18px #111;">Burma Superstar</div>
<div class="a t" style="left:1019.45px;top:933px;color:#111;font:400 17px/17px 'Liberation Sans',sans-serif;-webkit-text-stroke:0.18px #111;">$186.40</div>
<div class="a" style="left:186px;top:1008px;width:908px;height:1px;background:#ececec;"></div>
<div class="a t" style="left:199.00px;top:978px;color:#111;font:400 17px/17px 'Liberation Sans',sans-serif;-webkit-text-stroke:0.18px #111;">Mar 12</div>
<div class="a t" style="left:292.10px;top:978px;color:#111;font:400 17px/17px 'Liberation Sans',sans-serif;transform:scaleX(1.0048);-webkit-text-stroke:0.18px #111;">Office supplies <span class="em">—</span> presentation binders</div>
<div class="a t" style="left:699.90px;top:979px;color:#2b2769;font:700 16.8px/16.8px 'Liberation Sans',sans-serif;">Supplies</div>
<div class="a t" style="left:815.60px;top:978px;color:#111;font:400 17px/17px 'Liberation Sans',sans-serif;-webkit-text-stroke:0.18px #111;">Staples</div>
<div class="a t" style="left:1028.90px;top:978px;color:#111;font:400 17px/17px 'Liberation Sans',sans-serif;-webkit-text-stroke:0.18px #111;">$67.20</div>
<div class="a" style="left:186px;top:1053px;width:908px;height:1px;background:#ececec;"></div>
<div class="a t" style="left:199.00px;top:1022px;color:#111;font:400 17px/17px 'Liberation Sans',sans-serif;-webkit-text-stroke:0.18px #111;">Mar 15</div>
<div class="a t" style="left:292.10px;top:1022px;color:#111;font:400 17px/17px 'Liberation Sans',sans-serif;transform:scaleX(1.0167);-webkit-text-stroke:0.18px #111;">Zoom Pro monthly subscription</div>
<div class="a t" style="left:699.90px;top:1023px;color:#2b2769;font:700 16.8px/16.8px 'Liberation Sans',sans-serif;">Software</div>
<div class="a t" style="left:815.60px;top:1022px;color:#111;font:400 17px/17px 'Liberation Sans',sans-serif;-webkit-text-stroke:0.18px #111;">Zoom</div>
<div class="a t" style="left:1028.90px;top:1022px;color:#111;font:400 17px/17px 'Liberation Sans',sans-serif;-webkit-text-stroke:0.18px #111;">$15.99</div>
<div class="a" style="left:186px;top:1097px;width:908px;height:1px;background:#ececec;"></div>
<div class="a t" style="left:199.00px;top:1067px;color:#111;font:400 17px/17px 'Liberation Sans',sans-serif;-webkit-text-stroke:0.18px #111;">Mar 18</div>
<div class="a t" style="left:292.10px;top:1067px;color:#111;font:400 17px/17px 'Liberation Sans',sans-serif;transform:scaleX(1.0121);-webkit-text-stroke:0.18px #111;">Parking <span class="em">—</span> downtown client visit</div>
<div class="a t" style="left:699.90px;top:1068px;color:#2b2769;font:700 16.8px/16.8px 'Liberation Sans',sans-serif;">Travel</div>
<div class="a t" style="left:815.60px;top:1067px;color:#111;font:400 17px/17px 'Liberation Sans',sans-serif;-webkit-text-stroke:0.18px #111;">SP Plus</div>
<div class="a t" style="left:1028.90px;top:1067px;color:#111;font:400 17px/17px 'Liberation Sans',sans-serif;-webkit-text-stroke:0.18px #111;">$35.00</div>
<div class="a" style="left:186px;top:1142px;width:908px;height:1px;background:#ececec;"></div>
<div class="a t" style="left:199.00px;top:1112px;color:#111;font:400 17px/17px 'Liberation Sans',sans-serif;-webkit-text-stroke:0.18px #111;">Mar 20</div>
<div class="a t" style="left:292.10px;top:1112px;color:#111;font:400 17px/17px 'Liberation Sans',sans-serif;transform:scaleX(0.9928);-webkit-text-stroke:0.18px #111;">Figma team license (monthly)</div>
<div class="a t" style="left:699.90px;top:1113px;color:#2b2769;font:700 16.8px/16.8px 'Liberation Sans',sans-serif;">Software</div>
<div class="a t" style="left:815.60px;top:1112px;color:#111;font:400 17px/17px 'Liberation Sans',sans-serif;-webkit-text-stroke:0.18px #111;">Figma Inc</div>
<div class="a t" style="left:1028.90px;top:1112px;color:#111;font:400 17px/17px 'Liberation Sans',sans-serif;-webkit-text-stroke:0.18px #111;">$45.00</div>
<div class="a" style="left:186px;top:1187px;width:908px;height:1px;background:#ececec;"></div>
<div class="a t" style="left:199.00px;top:1156px;color:#111;font:400 17px/17px 'Liberation Sans',sans-serif;-webkit-text-stroke:0.18px #111;">Mar 22</div>
<div class="a t" style="left:292.10px;top:1156px;color:#111;font:400 17px/17px 'Liberation Sans',sans-serif;transform:scaleX(1.0079);-webkit-text-stroke:0.18px #111;">Prospect lunch meeting</div>
<div class="a t" style="left:699.90px;top:1157px;color:#2b2769;font:700 16.8px/16.8px 'Liberation Sans',sans-serif;">Meals</div>
<div class="a t" style="left:815.60px;top:1156px;color:#111;font:400 17px/17px 'Liberation Sans',sans-serif;-webkit-text-stroke:0.18px #111;">Tartine</div>
<div class="a t" style="left:1028.90px;top:1156px;color:#111;font:400 17px/17px 'Liberation Sans',sans-serif;-webkit-text-stroke:0.18px #111;">$94.50</div>
<div class="a" style="left:186px;top:1231px;width:908px;height:1px;background:#ececec;"></div>
<div class="a t" style="left:199.00px;top:1201px;color:#111;font:400 17px/17px 'Liberation Sans',sans-serif;-webkit-text-stroke:0.18px #111;">Mar 25</div>
<div class="a t" style="left:292.10px;top:1201px;color:#111;font:400 17px/17px 'Liberation Sans',sans-serif;transform:scaleX(1.0118);-webkit-text-stroke:0.18px #111;">FedEx <span class="em">—</span> contract documents to client</div>
<div class="a t" style="left:699.90px;top:1202px;color:#2b2769;font:700 16.8px/16.8px 'Liberation Sans',sans-serif;">Supplies</div>
<div class="a t" style="left:815.60px;top:1201px;color:#111;font:400 17px/17px 'Liberation Sans',sans-serif;-webkit-text-stroke:0.18px #111;">FedEx</div>
<div class="a t" style="left:1028.90px;top:1201px;color:#111;font:400 17px/17px 'Liberation Sans',sans-serif;-webkit-text-stroke:0.18px #111;">$28.75</div>
<svg class="a" style="left:0;top:0" width="1600" height="1226" viewBox="0 0 1600 1226"><g fill="none" stroke="rgba(34,197,94,.55)" stroke-width="2.5"><rect x="185.25" y="689.35" width="920.2" height="38.40" rx="4.2"/><rect x="185.25" y="730.25" width="920.2" height="38.50" rx="4.2"/><rect x="185.25" y="771.25" width="920.2" height="38.00" rx="4.2"/><rect x="185.25" y="811.75" width="920.2" height="38.25" rx="4.2"/><rect x="185.25" y="852.50" width="920.2" height="38.65" rx="4.2"/><rect x="185.25" y="893.65" width="920.2" height="38.60" rx="4.2"/><rect x="185.25" y="934.75" width="920.2" height="40.00" rx="4.2"/><rect x="185.25" y="977.25" width="920.2" height="38.70" rx="4.2"/><rect x="185.25" y="1018.45" width="920.2" height="38.30" rx="4.2"/><rect x="185.25" y="1059.25" width="920.2" height="38.10" rx="4.2"/><rect x="185.25" y="1099.85" width="920.2" height="38.90" rx="4.2"/><rect x="185.25" y="1141.25" width="920.2" height="40.50" rx="4.2"/><rect x="185.25" y="1184.25" width="920.2" height="37.00" rx="4.2"/></g><g fill="none" stroke="rgba(34,197,94,.42)" stroke-width="3" stroke-dasharray="5.5 3.6"><path d="M1107 708.1L1195.5 539.5"/><path d="M1107 749.1L1195.5 614.4"/><path d="M1107 789.9L1195.5 689.3"/><path d="M1107 830.5L1195.5 764.2"/><path d="M1107 871.4L1195.5 839.1"/><path d="M1107 912.6L1195.5 914.0"/><path d="M1107 954.4L1195.5 988.9"/><path d="M1107 996.2L1195.5 1063.8"/><path d="M1107 1037.2L1195.5 1138.7"/><path d="M1107 1077.9L1195.5 1213.6"/><path d="M1107 1118.9L1195.5 1288.5"/><path d="M1107 1161.1L1195.5 1363.4"/><path d="M1107 1202.3L1195.5 1438.3"/></g><g fill="rgba(34,197,94,.55)"><circle cx="1106.8" cy="708.1" r="2.4"/><circle cx="1106.8" cy="749.1" r="2.4"/><circle cx="1106.8" cy="789.9" r="2.4"/><circle cx="1106.8" cy="830.5" r="2.4"/><circle cx="1106.8" cy="871.4" r="2.4"/><circle cx="1106.8" cy="912.6" r="2.4"/><circle cx="1106.8" cy="954.4" r="2.4"/><circle cx="1106.8" cy="996.2" r="2.4"/><circle cx="1106.8" cy="1037.2" r="2.4"/><circle cx="1106.8" cy="1077.9" r="2.4"/><circle cx="1106.8" cy="1118.9" r="2.4"/><circle cx="1106.8" cy="1161.1" r="2.4"/><circle cx="1106.8" cy="1202.3" r="2.4"/></g></svg>
<div class="a" style="left:1195px;top:512.0px;width:3px;height:55.5px;background:#86e2a5;"></div>
<div class="a" style="left:1204.3px;top:518.9px;width:25.4px;height:25.4px;background:#9ae4b4;border-radius:12.7px;"></div>
<div class="a t" style="left:1212.65px;top:524px;color:#fff;font:400 17.2px/17.2px 'Liberation Sans',sans-serif;transform:scaleX(0.7500);-webkit-text-stroke:0.7px #fff;">1</div>
<div class="a t" style="left:1233.70px;top:521px;color:#2e8b50;font:400 17px/17px 'Liberation Sans',sans-serif;-webkit-text-stroke:0.15px #2e8b50;">Expense entry has all required fields</div>
<div class="a t" style="left:1233.68px;top:542px;color:#2e8b50;font:400 17px/17px 'Liberation Sans',sans-serif;transform:scaleX(1.0153);-webkit-text-stroke:0.15px #2e8b50;">present.</div>
<div class="a t" style="left:1304.30px;top:546px;color:#5aab78;font:400 13.7px/13.7px 'Liberation Mono',monospace;-webkit-text-stroke:0.2px #5aab78;">val=travel,387.50</div>
<div class="a" style="left:1195px;top:586.9px;width:3px;height:55.5px;background:#86e2a5;"></div>
<div class="a" style="left:1204.3px;top:593.8px;width:25.4px;height:25.4px;background:#9ae4b4;border-radius:12.7px;"></div>
<div class="a t" style="left:1212.80px;top:599px;color:#fff;font:400 17.2px/17.2px 'Liberation Sans',sans-serif;transform:scaleX(0.9333);-webkit-text-stroke:0.7px #fff;">2</div>
<div class="a t" style="left:1233.70px;top:596px;color:#2e8b50;font:400 17px/17px 'Liberation Sans',sans-serif;-webkit-text-stroke:0.15px #2e8b50;">Expense entry has all required fields</div>
<div class="a t" style="left:1233.68px;top:617px;color:#2e8b50;font:400 17px/17px 'Liberation Sans',sans-serif;transform:scaleX(1.0153);-webkit-text-stroke:0.15px #2e8b50;">present.</div>
<div class="a t" style="left:1304.30px;top:621px;color:#5aab78;font:400 13.7px/13.7px 'Liberation Mono',monospace;-webkit-text-stroke:0.2px #5aab78;">val=travel,42.00</div>
<div class="a" style="left:1195px;top:661.8px;width:3px;height:55.5px;background:#86e2a5;"></div>
<div class="a" style="left:1204.3px;top:668.7px;width:25.4px;height:25.4px;background:#9ae4b4;border-radius:12.7px;"></div>
<div class="a t" style="left:1212.80px;top:673px;color:#fff;font:400 17.2px/17.2px 'Liberation Sans',sans-serif;transform:scaleX(0.9333);-webkit-text-stroke:0.7px #fff;">3</div>
<div class="a t" style="left:1233.70px;top:671px;color:#2e8b50;font:400 17px/17px 'Liberation Sans',sans-serif;-webkit-text-stroke:0.15px #2e8b50;">Expense entry has all required fields</div>
<div class="a t" style="left:1233.68px;top:692px;color:#2e8b50;font:400 17px/17px 'Liberation Sans',sans-serif;transform:scaleX(1.0153);-webkit-text-stroke:0.15px #2e8b50;">present.</div>
<div class="a t" style="left:1304.30px;top:696px;color:#5aab78;font:400 13.7px/13.7px 'Liberation Mono',monospace;-webkit-text-stroke:0.2px #5aab78;">val=lodging,289.00</div>
<div class="a" style="left:1195px;top:736.7px;width:3px;height:55.5px;background:#86e2a5;"></div>
<div class="a" style="left:1204.3px;top:743.6px;width:25.4px;height:25.4px;background:#9ae4b4;border-radius:12.7px;"></div>
<div class="a t" style="left:1212.80px;top:748px;color:#fff;font:400 17.2px/17.2px 'Liberation Sans',sans-serif;transform:scaleX(0.8400);-webkit-text-stroke:0.7px #fff;">4</div>
<div class="a t" style="left:1233.70px;top:746px;color:#2e8b50;font:400 17px/17px 'Liberation Sans',sans-serif;-webkit-text-stroke:0.15px #2e8b50;">Expense entry has all required fields</div>
<div class="a t" style="left:1233.68px;top:767px;color:#2e8b50;font:400 17px/17px 'Liberation Sans',sans-serif;transform:scaleX(1.0153);-webkit-text-stroke:0.15px #2e8b50;">present.</div>
<div class="a t" style="left:1304.30px;top:771px;color:#5aab78;font:400 13.7px/13.7px 'Liberation Mono',monospace;-webkit-text-stroke:0.2px #5aab78;">val=meals,612.30</div>
<div class="a" style="left:1195px;top:811.6px;width:3px;height:55.5px;background:#86e2a5;"></div>
<div class="a" style="left:1204.3px;top:818.5px;width:25.4px;height:25.4px;background:#9ae4b4;border-radius:12.7px;"></div>
<div class="a t" style="left:1212.80px;top:823px;color:#fff;font:400 17.2px/17.2px 'Liberation Sans',sans-serif;transform:scaleX(0.9333);-webkit-text-stroke:0.7px #fff;">5</div>
<div class="a t" style="left:1233.70px;top:821px;color:#2e8b50;font:400 17px/17px 'Liberation Sans',sans-serif;-webkit-text-stroke:0.15px #2e8b50;">Expense entry has all required fields</div>
<div class="a t" style="left:1233.68px;top:842px;color:#2e8b50;font:400 17px/17px 'Liberation Sans',sans-serif;transform:scaleX(1.0153);-webkit-text-stroke:0.15px #2e8b50;">present.</div>
<div class="a t" style="left:1304.30px;top:846px;color:#5aab78;font:400 13.7px/13.7px 'Liberation Mono',monospace;-webkit-text-stroke:0.2px #5aab78;">val=travel,295.00</div>
<div class="a" style="left:1195px;top:886.5px;width:3px;height:55.5px;background:#86e2a5;"></div>
<div class="a" style="left:1204.3px;top:893.4px;width:25.4px;height:25.4px;background:#9ae4b4;border-radius:12.7px;"></div>
<div class="a t" style="left:1212.80px;top:898px;color:#fff;font:400 17.2px/17.2px 'Liberation Sans',sans-serif;transform:scaleX(0.9333);-webkit-text-stroke:0.7px #fff;">6</div>
<div class="a t" style="left:1233.70px;top:895px;color:#2e8b50;font:400 17px/17px 'Liberation Sans',sans-serif;-webkit-text-stroke:0.15px #2e8b50;">Expense entry has all required fields</div>
<div class="a t" style="left:1233.68px;top:917px;color:#2e8b50;font:400 17px/17px 'Liberation Sans',sans-serif;transform:scaleX(1.0153);-webkit-text-stroke:0.15px #2e8b50;">present.</div>
<div class="a t" style="left:1304.30px;top:921px;color:#5aab78;font:400 13.7px/13.7px 'Liberation Mono',monospace;-webkit-text-stroke:0.2px #5aab78;">val=meals,186.40</div>
<div class="a" style="left:1195px;top:961.4000000000001px;width:3px;height:55.5px;background:#86e2a5;"></div>
<div class="a" style="left:1204.3px;top:968.3px;width:25.4px;height:25.4px;background:#9ae4b4;border-radius:12.7px;"></div>
<div class="a t" style="left:1212.80px;top:973px;color:#fff;font:400 17.2px/17.2px 'Liberation Sans',sans-serif;transform:scaleX(0.9333);-webkit-text-stroke:0.7px #fff;">7</div>
<div class="a t" style="left:1233.70px;top:970px;color:#2e8b50;font:400 17px/17px 'Liberation Sans',sans-serif;-webkit-text-stroke:0.15px #2e8b50;">Expense entry has all required fields</div>
<div class="a t" style="left:1233.68px;top:992px;color:#2e8b50;font:400 17px/17px 'Liberation Sans',sans-serif;transform:scaleX(1.0153);-webkit-text-stroke:0.15px #2e8b50;">present.</div>
<div class="a t" style="left:1304.30px;top:996px;color:#5aab78;font:400 13.7px/13.7px 'Liberation Mono',monospace;-webkit-text-stroke:0.2px #5aab78;">val=supplies,67.20</div>
<div class="a" style="left:1195px;top:1036.3000000000002px;width:3px;height:55.5px;background:#86e2a5;"></div>
<div class="a" style="left:1204.3px;top:1043.2px;width:25.4px;height:25.4px;background:#9ae4b4;border-radius:12.7px;"></div>
<div class="a t" style="left:1212.80px;top:1048px;color:#fff;font:400 17.2px/17.2px 'Liberation Sans',sans-serif;transform:scaleX(0.9333);-webkit-text-stroke:0.7px #fff;">8</div>
<div class="a t" style="left:1233.70px;top:1045px;color:#2e8b50;font:400 17px/17px 'Liberation Sans',sans-serif;-webkit-text-stroke:0.15px #2e8b50;">Expense entry has all required fields</div>
<div class="a t" style="left:1233.68px;top:1067px;color:#2e8b50;font:400 17px/17px 'Liberation Sans',sans-serif;transform:scaleX(1.0153);-webkit-text-stroke:0.15px #2e8b50;">present.</div>
<div class="a t" style="left:1304.30px;top:1071px;color:#5aab78;font:400 13.7px/13.7px 'Liberation Mono',monospace;-webkit-text-stroke:0.2px #5aab78;">val=software,15.99</div>
<div class="a" style="left:1195px;top:1111.2px;width:3px;height:55.5px;background:#86e2a5;"></div>
<div class="a" style="left:1204.3px;top:1118.1px;width:25.4px;height:25.4px;background:#9ae4b4;border-radius:12.7px;"></div>
<div class="a t" style="left:1212.80px;top:1123px;color:#fff;font:400 17.2px/17.2px 'Liberation Sans',sans-serif;transform:scaleX(0.9333);-webkit-text-stroke:0.7px #fff;">9</div>
<div class="a t" style="left:1233.70px;top:1120px;color:#2e8b50;font:400 17px/17px 'Liberation Sans',sans-serif;-webkit-text-stroke:0.15px #2e8b50;">Expense entry has all required fields</div>
<div class="a t" style="left:1233.68px;top:1142px;color:#2e8b50;font:400 17px/17px 'Liberation Sans',sans-serif;transform:scaleX(1.0153);-webkit-text-stroke:0.15px #2e8b50;">present.</div>
<div class="a t" style="left:1304.30px;top:1146px;color:#5aab78;font:400 13.7px/13.7px 'Liberation Mono',monospace;-webkit-text-stroke:0.2px #5aab78;">val=travel,35.00</div>
<div class="a" style="left:1195px;top:1186.1px;width:3px;height:55.5px;background:#86e2a5;"></div>
<div class="a" style="left:1204.3px;top:1193.0px;width:25.4px;height:25.4px;background:#9ae4b4;border-radius:12.7px;"></div>
<div class="a t" style="left:1207.14px;top:1198px;color:#fff;font:400 16.4px/16.4px 'Liberation Sans',sans-serif;transform:scaleX(1.0588);-webkit-text-stroke:0.7px #fff;">10</div>
<div class="a t" style="left:1233.70px;top:1195px;color:#2e8b50;font:400 17px/17px 'Liberation Sans',sans-serif;-webkit-text-stroke:0.15px #2e8b50;">Expense entry has all required fields</div>
<div class="a t" style="left:1233.68px;top:1216px;color:#2e8b50;font:400 17px/17px 'Liberation Sans',sans-serif;transform:scaleX(1.0153);-webkit-text-stroke:0.15px #2e8b50;">present.</div>
<div class="a t" style="left:1304.30px;top:1220px;color:#5aab78;font:400 13.7px/13.7px 'Liberation Mono',monospace;-webkit-text-stroke:0.2px #5aab78;">val=software,45.00</div>
<svg class="a" style="left:1527px;top:432px;" width="56" height="80" viewBox="0 0 56 80"><g filter="url(#cs)"><path d="M11.1 15.5V55.5L20.5 47.4 28 65.5l7.5-3.5-6.25-17.75h10z" fill="#000" stroke="#fff" stroke-width="6.4" stroke-linejoin="miter" stroke-miterlimit="10" paint-order="stroke"/></g><defs><filter id="cs" x="-30%" y="-30%" width="160%" height="160%"><feDropShadow dx="0" dy="1.5" stdDeviation="1.6" flood-color="#000" flood-opacity=".3"/></filter></defs></svg>
</div>
</body></html>
